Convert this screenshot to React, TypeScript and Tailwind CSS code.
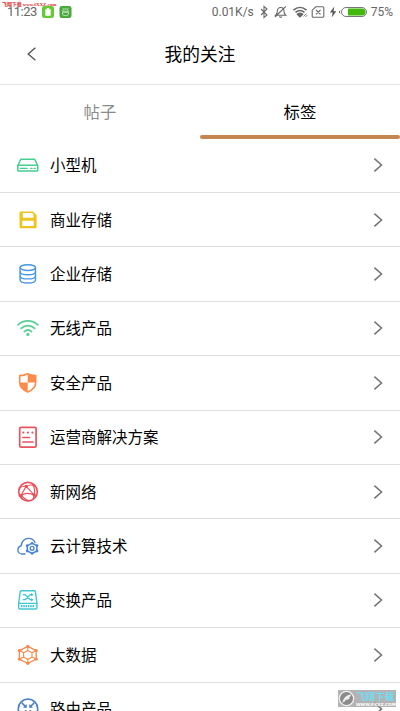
import type { ReactNode } from "react";

interface Tag {
  name: string;
  color: string;
  icon: ReactNode;
}

const TAGS: Tag[] = [
  {
    name: "小型机",
    color: "text-[#45d08f]",
    icon: (
      <>
        <path d="M4.8 6.2h13.9l3 6.6v4.4q0 .8-.8.8H2.6q-.8 0-.8-.8v-4.4z" strokeWidth="1.5" />
        <path d="M2 12.2h19.6M4.2 15.4h6.8M14.8 15.4h1.2M18 15.4h1.2" />
      </>
    ),
  },
  {
    name: "商业存储",
    color: "text-[#edc520]",
    icon: (
      <>
        <path
          d="M4.8 3.4h12l3.8 3.6v12q0 1.3-1.3 1.3H4.8q-1.3 0-1.3-1.3V4.7q0-1.3 1.3-1.3z"
          fill="currentColor"
          stroke="none"
        />
        <path d="M6.8 5h9.4l1.2 1.2v3.6H6.8zM6.3 12.7h11.4v5.2H6.3z" fill="#fff" stroke="none" />
      </>
    ),
  },
  {
    name: "企业存储",
    color: "text-[#4a97e4]",
    icon: (
      <>
        <ellipse cx="11.8" cy="5.6" rx="7.7" ry="2.9" />
        <path d="M4.1 5.6v12.4c0 1.7 3.4 3 7.7 3s7.7-1.3 7.7-3V5.6" />
        <path d="M4.1 9.7c0 1.7 3.4 3 7.7 3s7.7-1.3 7.7-3M4.1 13.9c0 1.7 3.4 3 7.7 3s7.7-1.3 7.7-3" />
      </>
    ),
  },
  {
    name: "无线产品",
    color: "text-[#58cf93]",
    icon: (
      <>
        <path d="M2 8.9c5.8-5.3 14-5.3 19.8 0M5.1 12.4c4-3.8 9.6-3.8 13.6 0M8.3 15.7c2.2-2.1 5-2.1 7.2 0" strokeWidth="1.7" />
        <circle cx="11.9" cy="18.4" r="1.6" fill="currentColor" stroke="none" />
      </>
    ),
  },
  {
    name: "安全产品",
    color: "text-[#fa8d4b]",
    icon: (
      <>
        <path d="M11.7 2.7c2.3 1.3 4.9 1.8 8 1.9v6.7c0 4.6-3.2 7.8-8 9.7-4.8-1.9-8-5.1-8-9.7V4.6c3.1-.1 5.7-.6 8-1.9z" strokeWidth="1.6" />
        <path d="M11.7 2.8c2.3 1.2 4.9 1.7 8 1.8v7h-8zM3.8 11.6h7.9v9.2c-4.8-1.9-7.7-4.9-7.9-9.2z" fill="currentColor" stroke="none" />
      </>
    ),
  },
  {
    name: "运营商解决方案",
    color: "text-[#e5565f]",
    icon: (
      <>
        <rect x="3.7" y="2.3" width="16.4" height="19.8" rx="1.2" strokeWidth="1.7" />
        <g fill="currentColor" stroke="none">
          <circle cx="7.4" cy="7.6" r="1.1" />
          <circle cx="11.9" cy="7.6" r="1.1" />
          <circle cx="16.4" cy="7.6" r="1.1" />
        </g>
        <path d="M6.8 12.4h6.8M6.8 16.9h10.4" strokeWidth="1.5" />
      </>
    ),
  },
  {
    name: "新网络",
    color: "text-[#e8505a]",
    icon: (
      <>
        <circle cx="12" cy="11.7" r="9.3" strokeWidth="1.6" />
        <path d="M10.2 6.4 5 15.2M10.2 6.4l8 8.6M10.2 6.4C13 4.6 16.5 4.8 19 6.2M10.2 6.4C7.5 5.8 5.5 6.5 4 7.8M5 15.2c4-2.3 8.8-2.2 13.2-.2M5 15.2l1.2 4M18.2 15l-1 4M16.4 4.2c2.2 3.3 2.8 7 1.8 10.8M5 15.2c1.8 2.2 4.7 4.5 8 5.8" strokeWidth="1.1" />
        <g fill="currentColor" stroke="none">
          <circle cx="10.2" cy="6.4" r="1.7" />
          <circle cx="5.1" cy="15.2" r="1.5" />
          <circle cx="18.2" cy="15" r="1.7" />
        </g>
      </>
    ),
  },
  {
    name: "云计算技术",
    color: "text-[#4b84d6]",
    icon: (
      <>
        <path d="M9 20H6.2c-2.5 0-4.3-1.8-4.3-4.1 0-2.1 1.3-3.6 3.4-4.1C5.4 7.5 8.5 4.4 12.5 4.4c3 0 5.3 1.5 6.5 4" />
        <path d="m16.1 9.2 4.8 2.6v5l-4.8 2.7-4.8-2.7v-5z" strokeWidth="1.5" />
        <circle cx="16.1" cy="14.3" r="1.9" />
        <g fill="currentColor" stroke="none">
          <circle cx="16.1" cy="9.3" r="1.2" />
          <circle cx="21" cy="11.7" r="1.4" />
          <circle cx="21" cy="17" r="1.4" />
          <circle cx="16.1" cy="19.5" r="1.2" />
          <circle cx="11.2" cy="17" r="1.4" />
          <circle cx="11.2" cy="11.7" r="1.4" />
        </g>
      </>
    ),
  },
  {
    name: "交换产品",
    color: "text-[#43c6d4]",
    icon: (
      <>
        <path d="M5.2 2.8h13.2q.9 0 1 .9l1.5 11.3v4.9q0 1.1-1.1 1.1h-16q-1.1 0-1.1-1.1V15L4.2 3.7q.1-.9 1-.9zM2.7 15.4h18.2" />
        <path d="M7.2 6.7h2l5 5h2.3M7.2 11.7h2l5-5h2.3" strokeWidth="1.3" />
        <path d="m15 4.9 2.4 1.8L15 8.5zM15 9.9l2.4 1.8-2.4 1.8z" fill="currentColor" stroke="none" />
        <path d="M5 18.2h13.7" strokeWidth="2.2" strokeDasharray="1.5 .8" strokeLinecap="butt" />
      </>
    ),
  },
  {
    name: "大数据",
    color: "text-[#f58b50]",
    icon: (
      <>
        <path d="m11.8 3.3 8.4 4.3v8.5l-8.4 4.4-8.4-4.4V7.6z" strokeWidth="1.3" />
        <path d="m11.8 7.4 4.2 2.3v4.4l-4.2 2.3-4.2-2.3V9.7zM11.8 3.3v4.1M20.2 7.6 16 9.7M20.2 16.1l-4.2-2M11.8 20.5v-4.1M3.4 16.1l4.2-2M3.4 7.6l4.2 2.1" strokeWidth="1.1" />
        <g fill="currentColor" stroke="none">
          <circle cx="11.8" cy="3.5" r="1.7" />
          <circle cx="20.2" cy="7.6" r="1.7" />
          <circle cx="20.2" cy="16.1" r="1.7" />
          <circle cx="11.8" cy="20.3" r="1.7" />
          <circle cx="3.4" cy="16.1" r="1.7" />
          <circle cx="3.4" cy="7.6" r="1.7" />
        </g>
      </>
    ),
  },
  {
    name: "路由产品",
    color: "text-[#477fc9]",
    icon: (
      <>
        <circle cx="12" cy="11.7" r="9.7" strokeWidth="1.6" />
        <path d="m6.2 6.2 3.4 3.4M17.8 6.2l-3.4 3.4M6.2 17.3l3.6-3.6M17.8 17.3l-3.6-3.6" strokeWidth="1.6" />
        <path d="m10.7 6.9v3.8H6.9zM13.3 6.9v3.8h3.8z" fill="currentColor" stroke="none" />
      </>
    ),
  },
];

const Chevron = () => (
  <svg viewBox="0 0 10 16" className="w-[10px] h-4 shrink-0" fill="none" stroke="#777" strokeWidth="1.6">
    <path d="m1.4 1.6 7.1 6.4-7.1 6.4" />
  </svg>
);

const StatusBar = () => (
  <div className="relative h-6 shrink-0 flex items-center justify-between px-[7px] text-[#666] font-['Roboto',sans-serif]">
    <div className="flex items-center">
      <span className="text-[13px] leading-4 w-[35px] tracking-[-0.5px]">11:23</span>
      <svg viewBox="0 0 30 12" className="w-[30px] h-3">
        <rect width="12" height="12" rx="2.2" fill="#65c936" />
        <path d="M3.3 3.2h1.6V2h2.2v1.2h1.6v6.5H3.3z" fill="#fff" />
        <rect x="17.5" width="12" height="12" rx="2.2" fill="#4aa83d" />
        <g fill="none" stroke="#d9f0d5" strokeWidth=".8">
          <path d="M20.5 5.3c.3-3.2 5.7-3.2 6 0zM20.5 6.3v1.8q0 1.5 3 1.5t3-1.5V6.3zM21.4 2.9l-.8-1M25.6 2.9l.8-1" />
        </g>
      </svg>
    </div>
    <div className="flex items-center">
      <span className="text-[12px] leading-4 w-[49px]">0.01K/s</span>
      <svg viewBox="0 0 110 16" className="w-[110px] h-4 -ml-[2px]" fill="none" stroke="#686868" strokeWidth="1.1">
        <path d="m2 5 6 6-3 2.6V2.4L8 5l-6 6" />
        <path d="M16.7 11.3c1.3-1 1.6-2.2 1.6-4.1 0-5 6.7-5 6.7 0 0 1.9.4 3.1 1.7 4.1zM20.2 12.7q1.4 1.3 2.8 0M26.9 2.4 15.9 13" />
        <path d="M34.4 6.1c4-3.5 9.2-3.5 13.2 0M36.5 8.4c2.8-2.4 6.2-2.4 9 0" strokeWidth="1.5" />
        <path d="m41 13-2.8-2.8q2.8-2.1 5.6 0z" fill="#686868" />
        <path d="m44.5 12.5 3-3M46.4 13l2-2" strokeWidth=".8" />
        <path d="M56.8 2.8h7q1 0 1 1v8.4q0 1-1 1h-9.6q-1 0-1-1V6.2zM57 6l4.5 4.4M61.5 6 57 10.4" />
        <path d="m75.3 2.5-4.4 6h2.8l-1 5 4.6-6.3h-2.8z" fill="#555" stroke="none" />
        <rect x="82.5" y="3.5" width="25" height="9" rx="4.5" stroke="#777" strokeWidth="1" />
        <path d="M89 4.5h14a3.5 3.5 0 0 1 0 7H89z" fill="#42b90a" stroke="none" />
        <path d="M81 6.6q-1.2 1.4 0 2.8" strokeWidth="1" />
      </svg>
      <span className="text-[12px] leading-4 ml-[2px]">75%</span>
    </div>
    <span className="absolute left-[2px] top-0 text-[4.9px] leading-[10px] font-bold text-[#d93030] whitespace-nowrap font-['Liberation_Serif','Noto_Sans_CJK_SC',serif]">
      飞翔下载 www.fXXZ.com
    </span>
  </div>
);

const Watermark = () => (
  <div className="absolute left-[338px] top-[690px] w-[58px] h-[17px] bg-[#999]/75 flex items-center gap-px">
    <svg viewBox="0 0 18 18" className="w-[17px] h-[17px] shrink-0">
      <circle cx="9" cy="9" r="7.6" fill="#8b8b8b" stroke="#eee" strokeWidth="1.4" />
      <path d="M4.5 13.5C6 8 8.5 5.2 14 4.7c-.5 2.5-2 3.2-4.5 3.3h3c-.6 2-2 2.4-4 2.4-1.2 1.8-2.2 2.7-4 3.1z" fill="#eee" />
    </svg>
    <div className="flex flex-col whitespace-nowrap">
      <span className="text-[9.6px] leading-[11px] font-bold text-[#72dcf2]">飞翔下载</span>
      <span className="text-[4.2px] leading-[5px] font-bold text-white font-['DejaVu_Sans',sans-serif]">WWW.FXXZ.COM</span>
    </div>
  </div>
);

export default function App() {
  return (
    <div className="relative w-[400px] h-[711px] overflow-hidden bg-white text-black flex flex-col font-['Noto_Sans_CJK_SC',sans-serif]">
      <StatusBar />

      {/* title */}
      <header className="h-[61px] shrink-0 border-b border-[#e3e3e3] grid grid-cols-[1fr_auto_1fr] items-center">
        <svg viewBox="0 0 10 16" className="w-[10px] h-4 ml-[26px] -mt-px" fill="none" stroke="#555" strokeWidth="1.4">
          <path d="M9.4 1.7 2.2 8l7.2 6.3" />
        </svg>
        <h1 className="text-[17.7px] leading-6 -mt-[3px]">我的关注</h1>
      </header>

      {/* tabs */}
      <nav className="h-[53.6px] shrink-0 grid grid-cols-2 text-[16.4px] leading-[53px] text-center">
        <div className="text-[#8c8c8c]">帖子</div>
        <div className="flex flex-col">
          <span className="h-[50px]">标签</span>
          <span className="h-[3.5px] rounded-full bg-[#c58752]" />
        </div>
      </nav>

      <ul className="shrink-0">
        {TAGS.map((tag) => (
          <li
            key={tag.name}
            className="h-[54.4px] border-b border-[#dedede] flex items-center gap-[10px] pl-4 pr-[17px]"
          >
            <svg
              viewBox="0 0 24 24"
              className={`size-6 shrink-0 ${tag.color}`}
              fill="none"
              stroke="currentColor"
              strokeWidth="1.4"
              strokeLinecap="round"
              strokeLinejoin="round"
            >
              {tag.icon}
            </svg>
            <span className="flex-1 text-[15.5px] leading-6 -mt-[2px]">{tag.name}</span>
            <Chevron />
          </li>
        ))}
      </ul>

      <Watermark />
    </div>
  );
}
